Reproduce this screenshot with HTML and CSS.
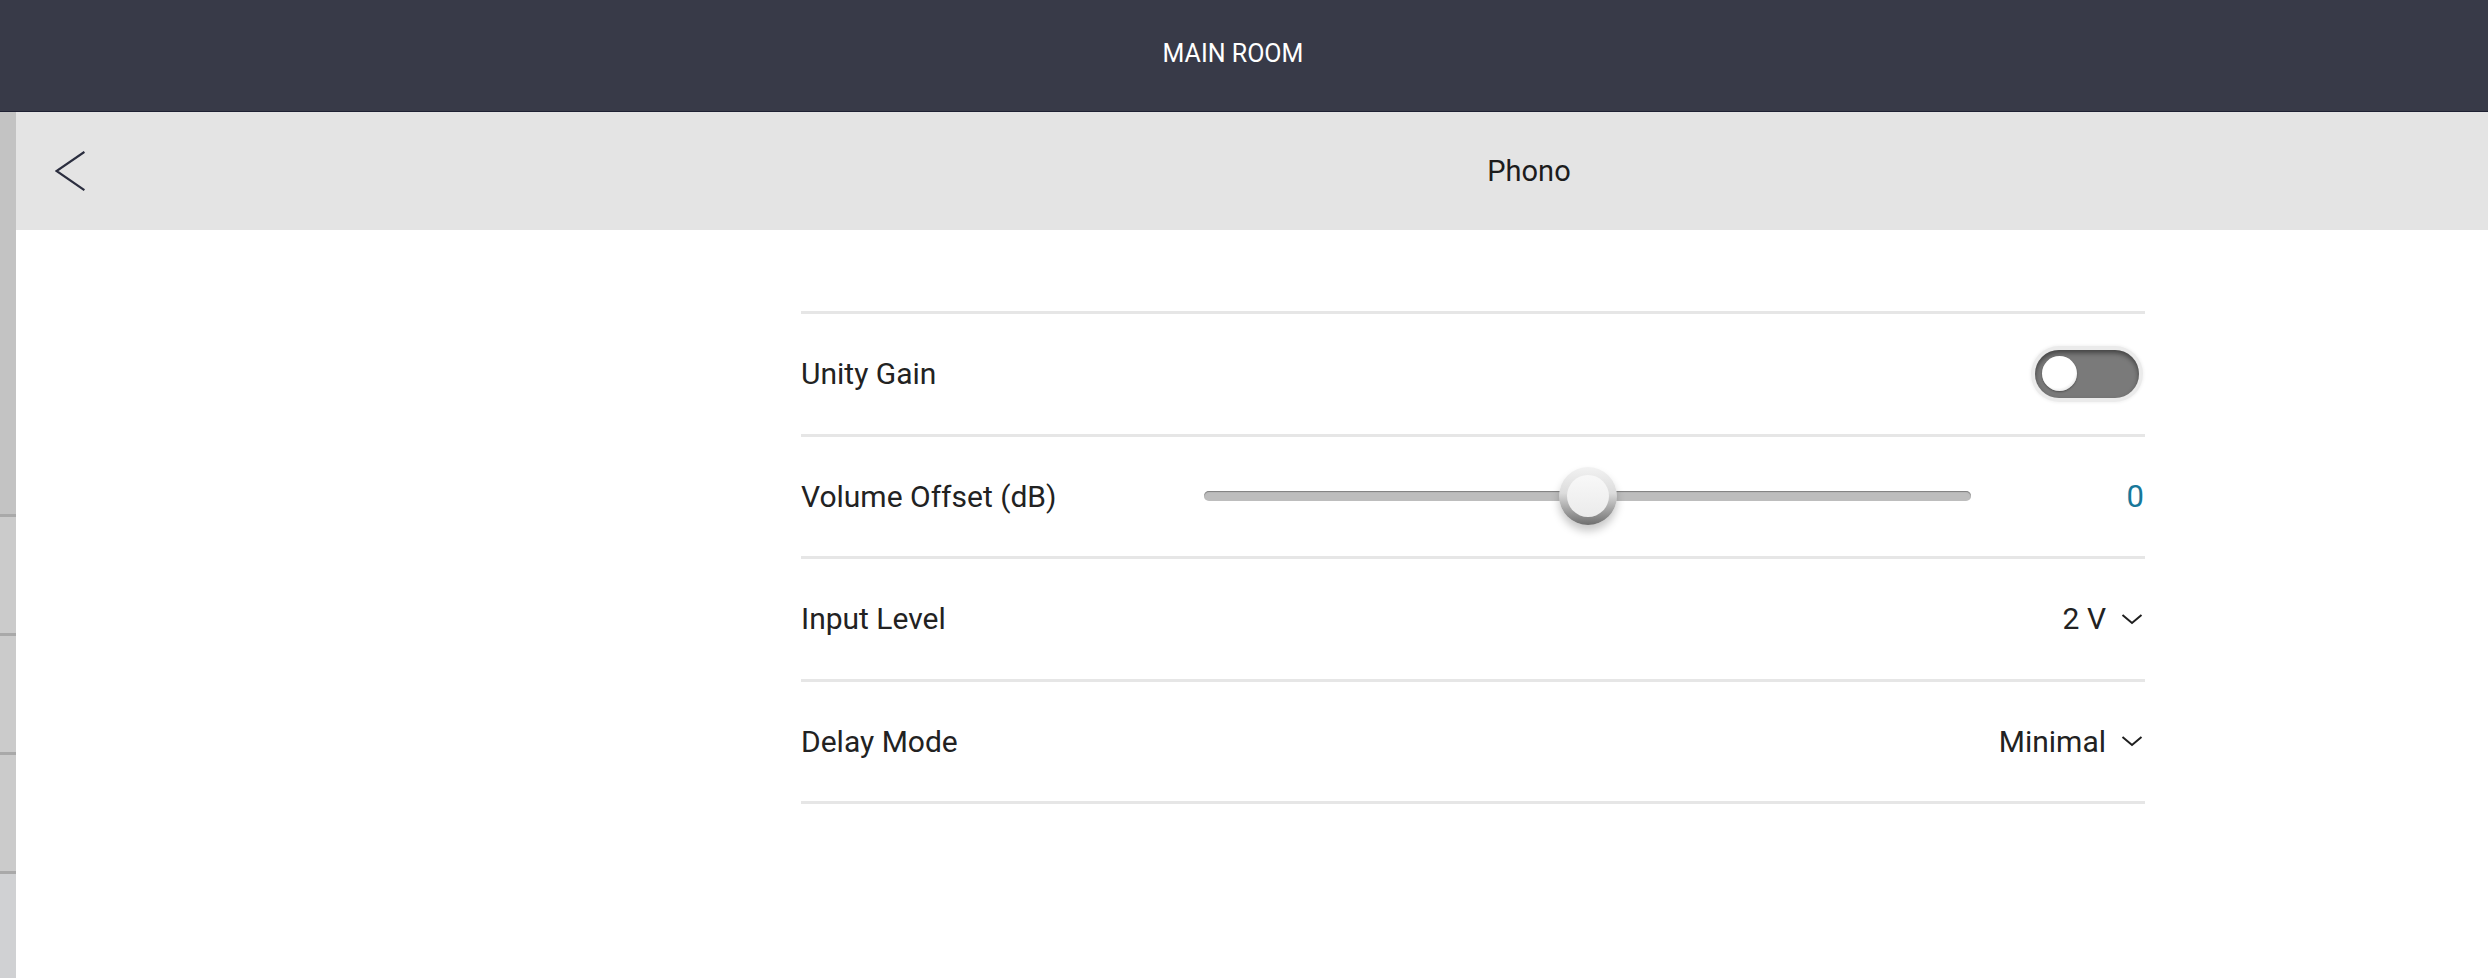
FILE: index.html
```html
<!DOCTYPE html>
<html lang="en">
<head>
<meta charset="utf-8">
<title>Phono</title>
<link rel="stylesheet" href="styles.css">
</head>
<body>
<div class="app">
  <header class="topbar"><span class="topbar-title">MAIN ROOM</span></header>
  <div class="main">
    <aside class="strip">
      <div class="seg seg-first"></div>
      <div class="seg"></div>
      <div class="seg"></div>
      <div class="seg"></div>
      <div class="seg seg-last"></div>
    </aside>
    <section class="panel">
      <div class="subbar">
        <div class="back-zone">
          <svg class="back" width="30" height="40" viewBox="0 0 30 40" aria-label="Back">
            <polyline points="28.5,1.5 1.5,20 28.5,38.5" fill="none" stroke="#2b2e3f" stroke-width="2.2" stroke-linecap="square" stroke-linejoin="miter"/>
          </svg>
        </div>
        <h1 class="subbar-title">Phono</h1>
      </div>
      <div class="list">
        <div class="row">
          <span class="label grow">Unity Gain</span>
          <span class="toggle"><span class="knob"></span></span>
        </div>
        <div class="row">
          <span class="label fixed">Volume Offset (dB)</span>
          <div class="slider"><span class="thumb"><span class="thumb-face"></span></span></div>
          <span class="value">0</span>
        </div>
        <div class="row">
          <span class="label grow">Input Level</span>
          <span class="select"><span class="select-value">2 V</span>
            <svg class="chev" width="22" height="12" viewBox="0 0 22 12"><polyline points="1.5,2 11,10 20.5,2" fill="none" stroke="#1f1f1f" stroke-width="2"/></svg>
          </span>
        </div>
        <div class="row">
          <span class="label grow">Delay Mode</span>
          <span class="select"><span class="select-value">Minimal</span>
            <svg class="chev" width="22" height="12" viewBox="0 0 22 12"><polyline points="1.5,2 11,10 20.5,2" fill="none" stroke="#1f1f1f" stroke-width="2"/></svg>
          </span>
        </div>
      </div>
    </section>
  </div>
</div>
</body>
</html>
```
FILE: styles.css
```css
html, body {
  margin: 0;
  padding: 0;
}
body {
  font-family: Roboto, "Liberation Sans", sans-serif;
  background: #ffffff;
  width: 2488px;
  height: 978px;
  overflow: hidden;
}
.app {
  display: flex;
  flex-direction: column;
  height: 978px;
}
.topbar {
  height: 111px;
  flex: none;
  background: #383a48;
  border-bottom: 1px solid #1e2032;
  display: flex;
  align-items: center;
  justify-content: center;
  padding: 0 22px 0 0;
  box-sizing: content-box;
}
.topbar-title {
  color: #ffffff;
  font-size: 25px;
  line-height: 30px;
  margin-bottom: 3px;
}
.main {
  flex: 1;
  display: flex;
  min-height: 0;
}
.strip {
  width: 16px;
  flex: none;
  display: flex;
  flex-direction: column;
}
.seg {
  height: 116px;
  flex: none;
  background: #cbcbcb;
  border-bottom: 3px solid #a9a9a9;
}
.seg-first {
  height: 402px;
  background: #c3c3c3;
}
.seg-last {
  flex: 1;
  border-bottom: none;
  background: #d0d1d3;
}
.panel {
  flex: 1;
  display: flex;
  flex-direction: column;
}
.subbar {
  height: 118px;
  flex: none;
  background: #e4e4e4;
  display: flex;
  align-items: center;
}
.back-zone {
  width: 554px;
  flex: none;
  box-sizing: border-box;
  padding-left: 39px;
  display: flex;
  align-items: center;
}
.back {
  display: block;
}
.subbar-title {
  flex: 1;
  margin: 0;
  text-align: center;
  font-size: 29px;
  font-weight: 400;
  color: #1c1c1c;
}
.list {
  margin: 81px 0 0 785px;
  width: 1344px;
  border-top: 3px solid #e6e6e6;
}
.row {
  height: 119.5px;
  border-bottom: 3px solid #e6e6e6;
  display: flex;
  align-items: center;
}
.label {
  font-size: 30px;
  color: #222222;
}
.grow {
  flex: 1;
}
.fixed {
  width: 403px;
  flex: none;
}
.toggle {
  width: 104px;
  height: 48px;
  box-sizing: border-box;
  border-radius: 24px;
  background: #7a7a7a;
  padding: 0 7px;
  margin-right: 6px;
  display: flex;
  align-items: center;
  box-shadow: 0 0 0 4px #ebebeb, 0 0 3px 5px rgba(0, 0, 0, 0.05), inset 0 3px 5px rgba(0, 0, 0, 0.45);
}
.knob {
  width: 35px;
  height: 35px;
  border-radius: 50%;
  background: radial-gradient(circle at 44% 40%, #ffffff 0%, #ffffff 62%, #e4e4e4 78%, #cdcdcd 100%);
  box-shadow: 0 1px 2px rgba(0, 0, 0, 0.35);
}
.slider {
  position: relative;
  width: 767px;
  height: 10px;
  flex: none;
  border-radius: 5px;
  background: #bdbdbd;
  box-shadow: inset 0 1px 1px #7e7e7e;
}
.thumb {
  position: absolute;
  left: 50%;
  top: 50%;
  width: 58px;
  height: 58px;
  margin: -29px 0 0 -29px;
  border-radius: 50%;
  background: linear-gradient(#f2f2f2 0%, #dcdcdc 45%, #6e6e6e 100%);
  box-shadow: 0 6px 8px rgba(0, 0, 0, 0.22);
  display: flex;
  align-items: center;
  justify-content: center;
}
.thumb-face {
  width: 42px;
  height: 42px;
  border-radius: 50%;
  background: linear-gradient(#f8f8f8, #ebebeb);
}
.value {
  flex: 1;
  text-align: right;
  font-size: 31px;
  color: #17789a;
  padding-right: 1px;
}
.select {
  display: flex;
  align-items: center;
}
.select-value {
  font-size: 30px;
  color: #222222;
}
.chev {
  display: block;
  margin: 0 2px 0 15px;
}
```
